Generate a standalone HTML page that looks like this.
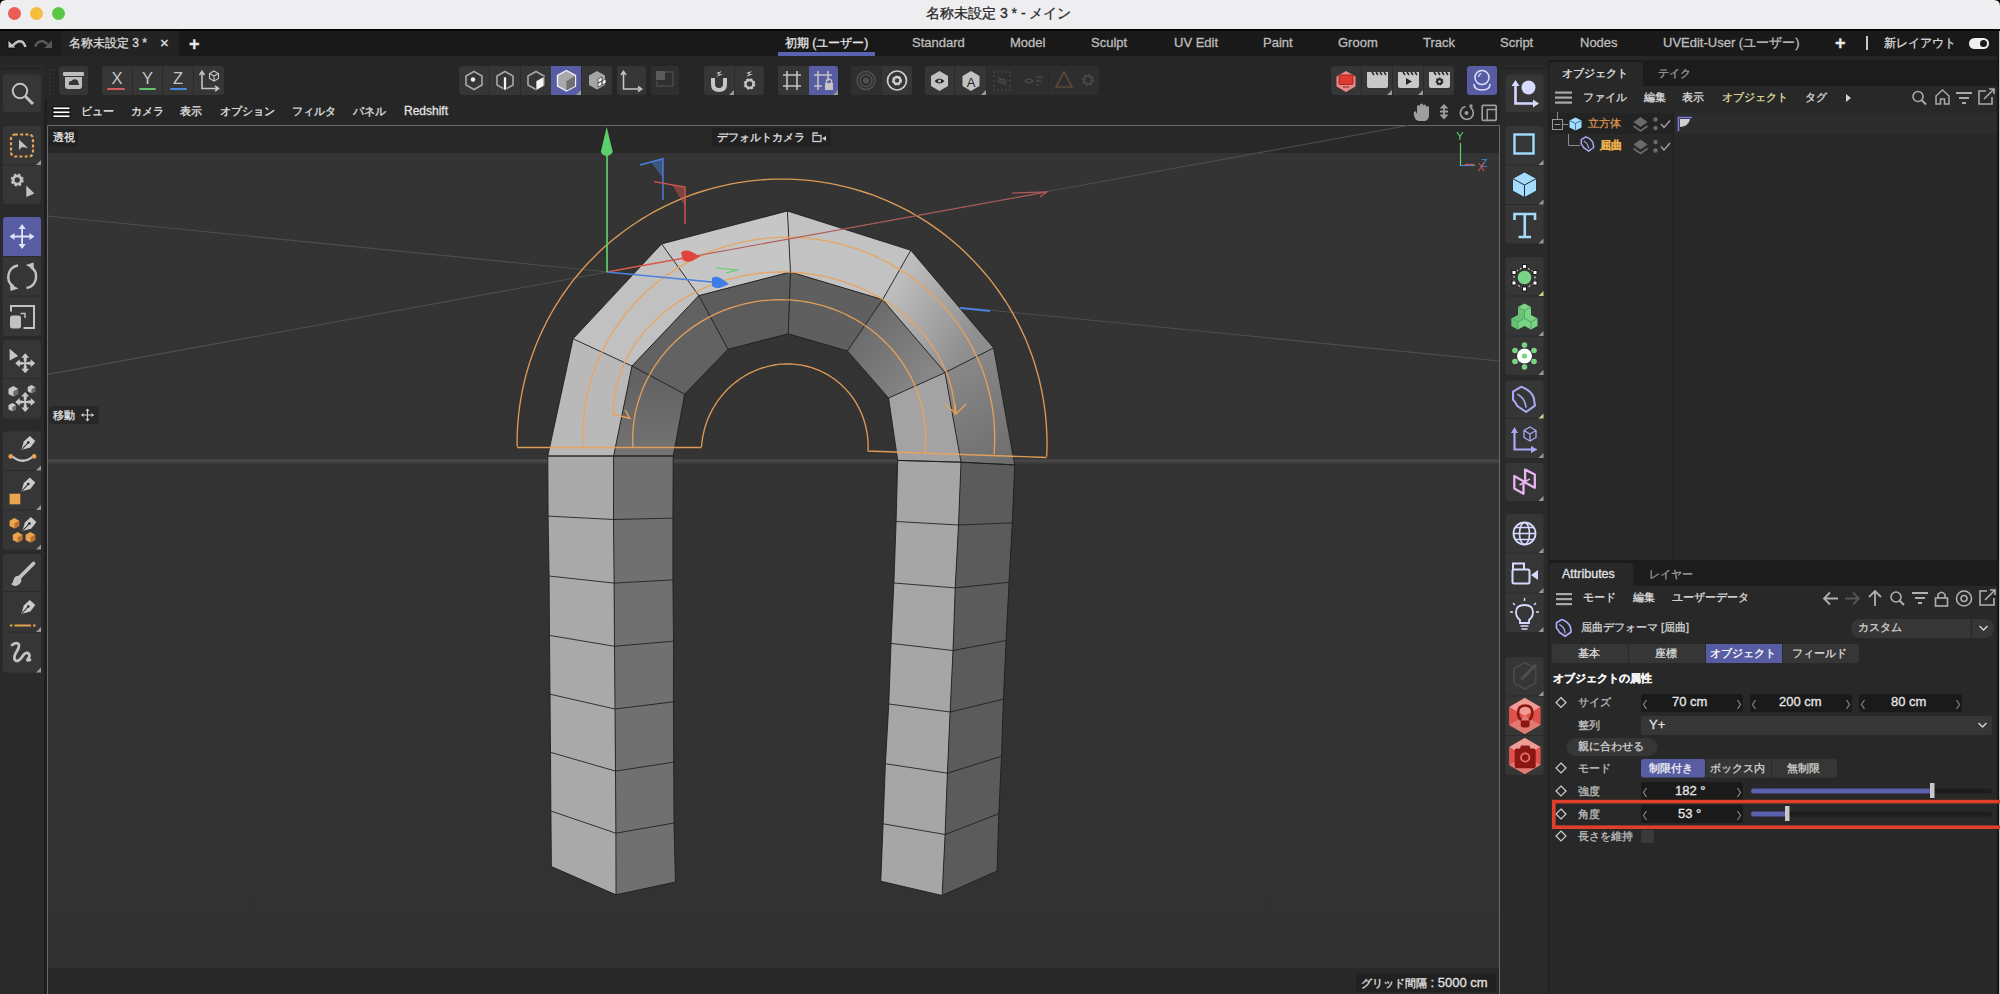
<!DOCTYPE html>
<html lang="ja">
<head>
<meta charset="utf-8">
<style>
*{box-sizing:border-box;margin:0;padding:0}
html,body{width:2000px;height:994px;overflow:hidden;background:#1e1e1e;font-family:"Liberation Sans",sans-serif;color:#d0d0d0;position:relative}
.a{position:absolute}
.t{position:absolute;white-space:nowrap;font-size:12px;line-height:14px;-webkit-text-stroke-width:0.3px}
svg{overflow:visible}
</style>
</head>
<body>
<!-- title bar -->
<div class="a" style="left:0;top:0;width:2000px;height:29px;background:#eeeef0"></div>
<div class="a" style="left:0;top:29px;width:2000px;height:2.5px;background:#050505"></div>
<div class="a" style="left:8px;top:7px;width:13px;height:13px;border-radius:50%;background:#ee5d55"></div>
<div class="a" style="left:30px;top:7px;width:13px;height:13px;border-radius:50%;background:#f4bd3b"></div>
<div class="a" style="left:52px;top:7px;width:13px;height:13px;border-radius:50%;background:#5cc747"></div>
<div class="t" style="left:926px;top:4px;font-size:14px;line-height:18px;color:#2a2a2a">名称未設定 3 * - メイン</div>

<!-- tab bar -->
<div class="a" style="left:0;top:31px;width:2000px;height:25px;background:#191919"></div>
<div class="a" style="left:0;top:31px;width:60px;height:25px;background:#1c1c1c"></div>
<div class="a" style="left:61px;top:31px;width:118px;height:25px;background:#232323"></div>
<svg class="a" style="left:0;top:30px" width="60" height="26" viewBox="0 30 60 26">
 <path d="M8.1 40V47.9H15.9Z" fill="#c4c4c4" stroke="#000" stroke-width="0.6"/>
 <path d="M13 45.5Q18 39.5 22.5 42Q24.5 43.5 25.5 47" fill="none" stroke="#c4c4c4" stroke-width="2.6"/>
 <path d="M51.9 40.2V47.9H44.4Z" fill="#5a5a5a"/>
 <path d="M35 46.5Q38 40 43.5 41.5Q46 42.5 47.5 44.5" fill="none" stroke="#5a5a5a" stroke-width="2.6"/>
</svg>
<div class="t" style="left:69px;top:36px;font-size:12px;line-height:14px;color:#d8d8d8">名称未設定 3 *</div>
<div class="t" style="left:160px;top:35px;font-size:15px;line-height:16px;color:#e0e0e0">×</div>
<div class="t" style="left:189px;top:34px;font-size:18px;line-height:20px;color:#e8e8e8;font-weight:bold">+</div>

<div class="t" style="left:785px;top:36px;font-size:12px;line-height:14px;color:#e6e6e6">初期 (ユーザー)</div>
<div class="a" style="left:778px;top:52px;width:97px;height:4px;background:#5a62b2"></div>
<div class="t" style="left:912px;top:36px;font-size:13px;line-height:14px;color:#bdbdbd">Standard</div>
<div class="t" style="left:1010px;top:36px;font-size:13px;line-height:14px;color:#bdbdbd">Model</div>
<div class="t" style="left:1091px;top:36px;font-size:13px;line-height:14px;color:#bdbdbd">Sculpt</div>
<div class="t" style="left:1174px;top:36px;font-size:13px;line-height:14px;color:#bdbdbd">UV Edit</div>
<div class="t" style="left:1263px;top:36px;font-size:13px;line-height:14px;color:#bdbdbd">Paint</div>
<div class="t" style="left:1338px;top:36px;font-size:13px;line-height:14px;color:#bdbdbd">Groom</div>
<div class="t" style="left:1423px;top:36px;font-size:13px;line-height:14px;color:#bdbdbd">Track</div>
<div class="t" style="left:1500px;top:36px;font-size:13px;line-height:14px;color:#bdbdbd">Script</div>
<div class="t" style="left:1580px;top:36px;font-size:13px;line-height:14px;color:#bdbdbd">Nodes</div>
<div class="t" style="left:1663px;top:36px;font-size:13px;line-height:14px;color:#bdbdbd">UVEdit-User (ユーザー)</div>
<div class="t" style="left:1835px;top:33px;font-size:18px;line-height:20px;color:#e8e8e8;font-weight:bold">+</div>
<div class="a" style="left:1866px;top:36px;width:2px;height:14px;background:#c8c8c8"></div>
<div class="t" style="left:1884px;top:36px;font-size:12px;line-height:14px;color:#d8d8d8">新レイアウト</div>
<div class="a" style="left:1969px;top:38px;width:20px;height:11px;border-radius:6px;background:#f0f0f0"></div>
<div class="a" style="left:1980px;top:40px;width:7px;height:7px;border-radius:50%;background:#1a1a1a"></div>

<!-- toolbar -->
<div class="a" style="left:0;top:56px;width:2000px;height:938px;background:#262626"></div>
<svg class="a" style="left:0;top:56px" width="1550" height="44" viewBox="0 56 1550 44">
 <defs>
  <pattern id="dots" width="4" height="4" patternUnits="userSpaceOnUse"><rect x="1" y="1" width="1.3" height="1.3" fill="#3c3c3c"/></pattern>
 </defs>
 <rect x="3" y="62" width="39" height="5" fill="url(#dots)"/>
 <rect x="46" y="67" width="8" height="28" fill="url(#dots)"/>
 <!-- buttons -->
 <g fill="#363636">
  <rect x="59" y="66" width="29" height="29" rx="3"/>
  <rect x="102" y="66" width="122" height="29" rx="3"/>
  <rect x="459" y="66" width="153" height="29" rx="3"/>
  <rect x="617" y="66" width="29" height="29" rx="3"/>
  <rect x="651" y="66" width="28" height="29" rx="3" fill="#2f2f2f"/>
  <rect x="704" y="66" width="60" height="29" rx="3"/>
  <rect x="778" y="66" width="60" height="29" rx="3"/>
  <rect x="851" y="66" width="61" height="29" rx="3"/>
  <rect x="925" y="66" width="174" height="29" rx="3"/>
  <rect x="1331" y="66" width="123" height="29" rx="3"/>
 </g>
 <rect x="551" y="66" width="31" height="29" fill="#575ca3"/>
 <rect x="808" y="66" width="30" height="29" rx="3" fill="#575ca3"/>
 <rect x="778" y="66" width="31" height="29" rx="3" fill="#363636"/>
 <rect x="1467" y="66" width="30" height="29" rx="3" fill="#575ca3"/>
 <rect x="986" y="66" width="113" height="29" rx="3" fill="#2e2e2e"/>
 <rect x="851" y="66" width="30" height="29" rx="3" fill="#2f2f2f"/>
 <!-- separators -->
 <g stroke="#2a2a2a" stroke-width="1">
  <path d="M132.5 66V95M162.5 66V95M193.5 66V95M489.5 66V95M520.5 66V95M581.5 66V95M734.5 66V95M881.5 66V95M954.5 66V95M986.5 66V95M1017.5 66V95M1048.5 66V95M1361.5 66V95M1392.5 66V95M1423.5 66V95"/>
 </g>
 <!-- corner triangles -->
 <g fill="#9a9a9a">
  <path d="M581 95L581 90L576 95Z"/><path d="M734 95L734 90L729 95Z"/><path d="M838 95L838 90L833 95Z"/>
  <path d="M986 95L986 90L981 95Z"/><path d="M1392 95L1392 90L1387 95Z"/><path d="M1423 95L1423 90L1418 95Z"/>
 </g>
 <!-- archive icon -->
 <rect x="63" y="72" width="21" height="4" rx="1" fill="#bdbdbd"/>
 <path d="M65 77H82V86Q82 89 79 89H68Q65 89 65 86Z" fill="#bdbdbd"/>
 <path d="M69 85Q68 81 71.5 81Q73 78.5 76 79.5Q78.5 80 78 82.5Q79.5 83 79 85Z" fill="#363636"/>
 <!-- XYZ -->
 <g font-family="Liberation Sans" font-size="16.5" fill="#c4c4c4" text-anchor="middle">
  <text x="117" y="84">X</text><text x="147.5" y="84">Y</text><text x="178" y="84">Z</text>
 </g>
 <rect x="107" y="88" width="18" height="2" rx="1" fill="#d35b5b"/>
 <rect x="139" y="88" width="17" height="2" rx="1" fill="#62c16a"/>
 <rect x="170" y="88" width="17" height="2" rx="1" fill="#4d84db"/>
 <!-- axis+cube -->
 <g fill="none" stroke="#c4c4c4" stroke-width="1.6">
  <path d="M202 72V88.5H218"/><path d="M199.5 75L202 71.5L204.5 75"/><path d="M215 86L218.5 88.5L215 91"/>
  <path d="M214 71L218.5 73.5V78.5L214 81L209.5 78.5V73.5Z M209.5 73.5L214 76L218.5 73.5M214 76V81" stroke-width="1.1"/>
 </g>
 <!-- model mode icons -->
 <g fill="none" stroke="#a8a8a8" stroke-width="1.6">
  <path d="M474 71.5L482 76V85L474 89.5L466 85V76Z"/>
  <path d="M505 71.5L513 76V85L505 89.5L497 85V76Z"/>
  <path d="M536 71.5L544 76V85L536 89.5L528 85V76Z"/>
 </g>
 <circle cx="473" cy="79.5" r="2.2" fill="#f0f0f0"/>
 <rect x="503.5" y="77" width="3" height="13" fill="#f4f4f4" stroke="#222" stroke-width="0.6"/>
 <path d="M536 81L544 76.5V86L536 90.5Z" fill="#f4f4f4" stroke="#222" stroke-width="0.6"/>
 <path d="M566.5 70.5L575.5 75.5V86L566.5 91L557.5 86V75.5Z" fill="#a9a9a9" stroke="#f0f2ff" stroke-width="1.4"/>
 <path d="M566.5 81L575 76V86L566.5 90.5Z" fill="#6f6f6f"/>
 <path d="M597 71L605 75.5V85L597 89.5L589 85V75.5Z" fill="#a5a5a5"/>
 <path d="M598 79L602 77V81L598 83Z M602 81L606 79V83L602 85Z M598 83L602 81 V85L598 87Z" fill="#f4f4f4" stroke="#1e1e1e" stroke-width="0.6"/>
 <g fill="none" stroke="#c4c4c4" stroke-width="1.6"><path d="M623.5 72V89H641"/><path d="M621 75L623.5 71.5L626 75"/><path d="M638 86.5L641.5 89L638 91.5"/></g>
 <rect x="656" y="71" width="9" height="9" fill="#5a5a5a"/><path d="M665 72H673V86H657V81" fill="none" stroke="#4a4a4a" stroke-width="1.5"/>
 <!-- magnet -->
 <path d="M713 78V84Q713 90 719 90Q725 90 725 84V78" fill="none" stroke="#c4c4c4" stroke-width="4"/>
 <path d="M716 73L722 71L719 74L723 74L716 77L719 74Z" fill="#c4c4c4"/>
 <path d="M746 73L752 71L749 74L753 74L746 77L749 74Z" fill="#c4c4c4"/>
 <circle cx="749.5" cy="84" r="4.2" fill="none" stroke="#c4c4c4" stroke-width="3.2" stroke-dasharray="2 1.3"/>
 <circle cx="749.5" cy="84" r="4" fill="none" stroke="#c4c4c4" stroke-width="2"/>
 <!-- grid icons -->
 <g fill="none" stroke="#c4c4c4" stroke-width="1.6">
  <path d="M787 71V90M797 71V90M783 75H801M783 86H801"/>
  <path d="M818 71V90M828 71V81M814 75H832M814 86H822"/>
 </g>
 <path d="M825 83H833V90H825Z" fill="#c4c4c4"/><path d="M826.5 83V80.5Q829 77.5 831.5 80.5V83" fill="none" stroke="#c4c4c4" stroke-width="1.4"/>
 <!-- circles -->
 <g fill="none" stroke="#505050" stroke-width="1.5"><circle cx="866" cy="80.5" r="9"/><circle cx="866" cy="80.5" r="6"/></g>
 <circle cx="866" cy="80.5" r="3" fill="#505050"/>
 <circle cx="897" cy="80.5" r="9.5" fill="none" stroke="#cfcfcf" stroke-width="1.7"/>
 <circle cx="897" cy="80.5" r="3.5" fill="none" stroke="#cfcfcf" stroke-width="3" stroke-dasharray="1.8 1.1"/>
 <circle cx="897" cy="80.5" r="3.5" fill="none" stroke="#cfcfcf" stroke-width="2"/>
 <!-- hex eye / A -->
 <path d="M939.5 71L948 76V86L939.5 91L931 86V76Z" fill="#c2c2c2"/>
 <path d="M934.5 81Q939.5 76 944.5 81Q939.5 86 934.5 81Z" fill="#222"/><circle cx="939.5" cy="81" r="1.5" fill="#c2c2c2"/>
 <path d="M971 71L979.5 76V86L971 91L962.5 86V76Z" fill="#c2c2c2"/>
 <text x="971" y="86.5" font-family="Liberation Sans" font-size="13" text-anchor="middle" fill="#222">A</text>
 <!-- dim icons -->
 <g fill="#474747">
  <circle cx="994" cy="72" r="0.9"/><circle cx="998" cy="72" r="0.9"/><circle cx="1002" cy="72" r="0.9"/><circle cx="1006" cy="72" r="0.9"/><circle cx="1010" cy="72" r="0.9"/>
  <circle cx="994" cy="90" r="0.9"/><circle cx="998" cy="90" r="0.9"/><circle cx="1002" cy="90" r="0.9"/><circle cx="1006" cy="90" r="0.9"/><circle cx="1010" cy="90" r="0.9"/>
  <circle cx="994" cy="76" r="0.9"/><circle cx="994" cy="81" r="0.9"/><circle cx="994" cy="86" r="0.9"/><circle cx="1010" cy="76" r="0.9"/><circle cx="1010" cy="81" r="0.9"/><circle cx="1010" cy="86" r="0.9"/>
 </g>
 <path d="M998 81Q1002 77 1006 81Q1002 85 998 81Z M998 77L1006 85" fill="none" stroke="#474747" stroke-width="1.2"/>
 <path d="M1025 81Q1029 77 1033 81Q1029 85 1025 81Z" fill="none" stroke="#474747" stroke-width="1.4"/>
 <path d="M1036 77H1043M1036 81H1041M1036 85H1039" stroke="#474747" stroke-width="1.4"/>
 <path d="M1064 72L1072 87H1056Z" fill="none" stroke="#5a4a38" stroke-width="1.6"/>
 <circle cx="1088" cy="80" r="4.5" fill="none" stroke="#474747" stroke-width="3.2" stroke-dasharray="2 1.4"/>
 <circle cx="1088" cy="80" r="4" fill="none" stroke="#474747" stroke-width="2"/>
 <!-- render icons -->
 <path d="M1346 71L1355.5 76.5V86.5L1346 92L1336.5 86.5V76.5Z" fill="#e88a85"/>
 <rect x="1339" y="75" width="14" height="9.5" rx="1" fill="#e03a33" stroke="#8c1f1a" stroke-width="0.8"/>
 <path d="M1343 87H1349" stroke="#8c1f1a" stroke-width="1"/>
 <g fill="#c8c8c8">
  <path d="M1367 72H1388V86Q1388 88 1386 88H1369Q1367 88 1367 86Z"/>
  <path d="M1398 72H1419V86Q1419 88 1417 88H1400Q1398 88 1398 86Z"/>
  <path d="M1429 72H1450V86Q1450 88 1448 88H1431Q1429 88 1429 86Z"/>
 </g>
 <g stroke="#262626" stroke-width="1.5">
  <path d="M1372 72L1374 75M1376 72L1378 75M1380 72L1382 75M1384 72L1386 75"/>
  <path d="M1403 72L1405 75M1407 72L1409 75M1411 72L1413 75M1415 72L1417 75"/>
  <path d="M1434 72L1436 75M1438 72L1440 75M1442 72L1444 75M1446 72L1448 75"/>
 </g>
 <path d="M1406 78V85L1412 81.5Z" fill="#262626"/>
 <circle cx="1439.5" cy="81.5" r="2.6" fill="none" stroke="#262626" stroke-width="2.6" stroke-dasharray="1.4 0.9"/>
 <circle cx="1439.5" cy="81.5" r="2.4" fill="none" stroke="#262626" stroke-width="1.6"/>
 <!-- blue lens -->
 <circle cx="1482" cy="77.5" r="7" fill="none" stroke="#dfe2ff" stroke-width="1.5"/>
 <path d="M1478.5 77Q1479 74 1481.5 73.5" fill="none" stroke="#dfe2ff" stroke-width="1.2"/>
 <path d="M1474 84Q1474 90 1482 90Q1490 90 1490 84" fill="none" stroke="#dfe2ff" stroke-width="1.5"/>
 <!-- right grip -->
 <rect x="1505" y="62" width="38" height="5" fill="url(#dots)"/>
</svg>

<!-- left column -->
<div class="a" style="left:0;top:70px;width:44px;height:924px;background:#2a2a2a"></div>
<div class="a" style="left:44px;top:99px;width:3px;height:895px;background:#1f1f1f"></div>
<!-- right column -->
<div class="a" style="left:1500px;top:70px;width:48px;height:924px;background:#2a2a2a"></div>
<div class="a" style="left:1548px;top:60px;width:1px;height:934px;background:#1d1d1d"></div>
<svg class="a" style="left:0;top:70px" width="47" height="620" viewBox="0 70 47 620">
 <g fill="#363636">
  <rect x="3" y="74.5" width="38" height="37.5" rx="3"/>
  <rect x="3" y="126" width="38" height="78" rx="3"/>
  <rect x="3" y="217" width="38" height="119" rx="3"/>
  <rect x="3" y="340" width="38" height="78.5" rx="3"/>
  <rect x="3" y="431.5" width="38" height="118" rx="3"/>
  <rect x="3" y="554" width="38" height="118.5" rx="3"/>
 </g>
 <rect x="3" y="217" width="38" height="40" rx="3" fill="#575ca3"/>
 <g stroke="#2a2a2a" stroke-width="1"><path d="M3 165H41M3 256.5H41M3 296H41M3 378.5H41M3 470.5H41M3 510H41M3 591.5H41M3 632H41"/></g>
 <g fill="#9a9a9a"><path d="M41 165V160L36 165Z"/><path d="M41 510V505L36 510Z"/><path d="M41 549.5V544.5L36 549.5Z"/><path d="M41 632V627L36 632Z"/><path d="M41 672.5V667.5L36 672.5Z"/></g>
 <!-- search -->
 <circle cx="20" cy="91" r="7.2" fill="none" stroke="#c2c2c2" stroke-width="2"/>
 <path d="M25.5 96.5L33 104" stroke="#c2c2c2" stroke-width="3"/>
 <!-- select -->
 <rect x="11" y="134.5" width="22" height="22" rx="4" fill="none" stroke="#e7a45a" stroke-width="2.2" stroke-dasharray="3 2.2"/>
 <path d="M19 139.5V150L22 147L28 148Z" fill="#c2c2c2"/>
 <!-- gear select -->
 <circle cx="17.2" cy="180" r="4.8" fill="none" stroke="#c2c2c2" stroke-width="3.4" stroke-dasharray="2.2 1.6"/>
 <circle cx="17.2" cy="180" r="4" fill="none" stroke="#c2c2c2" stroke-width="2.6"/>
 <path d="M26.3 185.4V197L34.4 193.5Z" fill="#c2c2c2"/>
 <!-- move active -->
 <path d="M22.1 226V247M11.5 236.5H32.5" fill="none" stroke="#dfe1f4" stroke-width="1.8"/>
 <path d="M18.5 229L22.1 224L25.7 229ZM18.5 244L22.1 249L25.7 244ZM14.5 232.9L9.5 236.5L14.5 240.1ZM29.5 232.9L34.5 236.5L29.5 240.1Z" fill="#dfe1f4"/>
 <!-- rotate -->
 <path d="M18 265.5A11.5 11.5 0 0 0 13.5 286.5" fill="none" stroke="#c2c2c2" stroke-width="2.4"/>
 <path d="M26.5 288A11.5 11.5 0 0 0 30.8 267" fill="none" stroke="#c2c2c2" stroke-width="2.4"/>
 <path d="M10 284L18.5 288.5L10.5 291Z" fill="#c2c2c2"/>
 <path d="M34 269.5L25.8 265L33.5 262.5Z" fill="#c2c2c2"/>
 <!-- scale -->
 <rect x="10" y="315.5" width="11" height="13" rx="2.5" fill="#c2c2c2"/>
 <path d="M11 311.5V306H34V328H23.5" fill="none" stroke="#c2c2c2" stroke-width="2"/>
 <path d="M20.5 313.5H25V318" fill="none" stroke="#c2c2c2" stroke-width="1.4"/>
 <!-- select+move -->
 <path d="M9.6 348.7V360.4L18.1 356.1Z" fill="#c8c8c8"/>
 <path d="M25.2 356.2V370.2M18.2 363.2H32.2" stroke="#c8c8c8" stroke-width="3"/><path d="M21.2 357.7L25.2 353.2L29.2 357.7ZM21.2 368.7L25.2 373.2L29.2 368.7ZM19.7 359.2L15.2 363.2L19.7 367.2ZM30.7 359.2L35.2 363.2L30.7 367.2Z" fill="#c8c8c8"/><path d="M22.7 360.7h1.5v1.5h-1.5zM26.2 360.7h1.5v1.5h-1.5zM22.7 364.2h1.5v1.5h-1.5zM26.2 364.2h1.5v1.5h-1.5z" fill="#333"/>
 <!-- model move -->
 <path d="M13.3 386L18.1 388.64V393.92L13.3 396.56L8.5 393.92V388.64Z" fill="#c8c8c8"/><path d="M13.3 391.28L18.1 388.64V393.92L13.3 396.56Z" fill="#6a6a6a"/><path d="M31.45 385L35.2 387.0625V391.1875L31.45 393.25L27.7 391.1875V387.0625Z" fill="#c8c8c8"/><path d="M31.45 389.125L35.2 387.0625V391.1875L31.45 393.25Z" fill="#6a6a6a"/><path d="M12.25 403L16.0 405.0625V409.1875L12.25 411.25L8.5 409.1875V405.0625Z" fill="#c8c8c8"/><path d="M12.25 407.125L16.0 405.0625V409.1875L12.25 411.25Z" fill="#6a6a6a"/>
 <path d="M25.2 395V409M18.2 402H32.2" stroke="#c8c8c8" stroke-width="3"/><path d="M21.2 396.5L25.2 392L29.2 396.5ZM21.2 407.5L25.2 412L29.2 407.5ZM19.7 398L15.2 402L19.7 406ZM30.7 398L35.2 402L30.7 406Z" fill="#c8c8c8"/><path d="M22.7 399.5h1.5v1.5h-1.5zM26.2 399.5h1.5v1.5h-1.5zM22.7 403h1.5v1.5h-1.5zM26.2 403h1.5v1.5h-1.5z" fill="#333"/>
 <!-- pen tools -->
 <g transform="translate(21.3 450)"><path d="M0 0L2.5 -8.5L8.5 -14L14 -9L9 -2.5Z" fill="#cbcbcb"/><path d="M0.5 -0.5L6.5 -7" stroke="#222" stroke-width="1.1"/><circle cx="7" cy="-7.5" r="1.3" fill="#222"/></g>
 <path d="M12.5 456.5Q22.5 465 33 456.5" fill="none" stroke="#c8c8c8" stroke-width="2.2"/>
 <circle cx="10.7" cy="456.4" r="2.3" fill="#e9a14f"/><circle cx="34.1" cy="456.4" r="2.3" fill="#e9a14f"/>
 <g transform="translate(21.3 491.5)"><path d="M0 0L2.5 -8.5L8.5 -14L14 -9L9 -2.5Z" fill="#cbcbcb"/><path d="M0.5 -0.5L6.5 -7" stroke="#222" stroke-width="1.1"/><circle cx="7" cy="-7.5" r="1.3" fill="#222"/></g>
 <rect x="9.6" y="493.7" width="10.7" height="10.6" fill="#eaa44f"/>
 <g transform="translate(22.4 531)"><path d="M0 0L2.5 -8.5L8.5 -14L14 -9L9 -2.5Z" fill="#cbcbcb"/><path d="M0.5 -0.5L6.5 -7" stroke="#222" stroke-width="1.1"/><circle cx="7" cy="-7.5" r="1.3" fill="#222"/></g>
 <path d="M14.399999999999999 518L19.2 520.64V525.92L14.399999999999999 528.56L9.6 525.92V520.64Z" fill="#eaa44f"/><path d="M14.399999999999999 523.28L19.2 520.64V525.92L14.399999999999999 528.56Z" fill="#b8732c"/><path d="M17.6 532L22.4 534.64V539.92L17.6 542.56L12.8 539.92V534.64Z" fill="#eaa44f"/><path d="M17.6 537.28L22.4 534.64V539.92L17.6 542.56Z" fill="#b8732c"/><path d="M30.400000000000002 532L35.2 534.64V539.92L30.400000000000002 542.56L25.6 539.92V534.64Z" fill="#eaa44f"/><path d="M30.400000000000002 537.28L35.2 534.64V539.92L30.400000000000002 542.56Z" fill="#b8732c"/>
 <path d="M41 470.5V465.5L36 470.5Z" fill="#9a9a9a"/>
 <!-- brush -->
 <path d="M33.5 563.5L20 577" stroke="#c2c2c2" stroke-width="3.8" stroke-linecap="round"/>
 <path d="M20.5 576Q23 581 19 584.5Q15 587.5 11 584Q13 583 13.5 580Q14.5 575 20.5 576Z" fill="#c2c2c2"/>
 <!-- pen line -->
 <g transform="translate(21.3 614)"><path d="M0 0L2.5 -8.5L8.5 -14L14 -9L9 -2.5Z" fill="#cbcbcb"/><path d="M0.5 -0.5L6.5 -7" stroke="#222" stroke-width="1.1"/><circle cx="7" cy="-7.5" r="1.3" fill="#222"/></g>
 <path d="M10 625.5H12.5M14.5 625.5H31M33 625.5H35.5" stroke="#e9a14f" stroke-width="2.2"/>
 <!-- spline -->
 <path d="M12 645Q16 642 18.5 644Q20 646 17 651Q13 657 15 660Q18 663 22 657Q25 652 28 653Q31 655 28 659Q26 661 30 660" fill="none" stroke="#c2c2c2" stroke-width="2.8" stroke-linecap="round" stroke-linejoin="round"/>
</svg>

<svg class="a" style="left:1500px;top:70px" width="48" height="710" viewBox="1500 70 48 710">
 <g fill="#363636">
  <rect x="1505.5" y="74.5" width="38" height="37.5" rx="3"/>
  <rect x="1505.5" y="126" width="38" height="117.5" rx="3"/>
  <rect x="1505.5" y="257" width="38" height="118" rx="3"/>
  <rect x="1505.5" y="380.5" width="38" height="77.5" rx="3"/>
  <rect x="1505.5" y="463" width="38" height="38" rx="3"/>
  <rect x="1505.5" y="514" width="38" height="118" rx="3"/>
  <rect x="1505.5" y="657" width="38" height="118" rx="3"/>
 </g>
 <g stroke="#2a2a2a" stroke-width="1"><path d="M1505 165H1544M1505 204.5H1544M1505 296H1544M1505 336H1544M1505 418.5H1544M1505 553H1544M1505 593H1544M1505 696H1544M1505 735.5H1544"/></g>
 <g fill="#9a9a9a"><path d="M1543.5 165V160L1538.5 165Z"/><path d="M1543.5 204.5V199.5L1538.5 204.5Z"/><path d="M1543.5 243.5V238.5L1538.5 243.5Z"/><path d="M1543.5 375V370L1538.5 375Z"/><path d="M1543.5 336V331L1538.5 336Z"/><path d="M1543.5 458V453L1538.5 458Z"/><path d="M1543.5 501V496L1538.5 501Z"/><path d="M1543.5 593V588L1538.5 593Z"/><path d="M1543.5 632V627L1538.5 632Z"/><path d="M1543.5 553V548L1538.5 553Z"/><path d="M1543.5 696V691L1538.5 696Z"/></g>
 <path d="M1543.5 296V291L1538.5 296Z" fill="#d8d08a"/><path d="M1543.5 418.5V413.5L1538.5 418.5Z" fill="#d8d08a"/>
 <!-- null / axis -->
 <circle cx="1528.5" cy="87.5" r="7" fill="#d6daff"/>
 <path d="M1515.5 84V103.5H1535" fill="none" stroke="#d6daff" stroke-width="2.6"/>
 <path d="M1511.5 86L1515.5 80L1519.5 86ZM1533 99.5L1539 103.5L1533 107.5Z" fill="#d6daff"/>
 <!-- square -->
 <rect x="1514.5" y="134.5" width="19" height="19" fill="none" stroke="#9fdcff" stroke-width="2.4"/>
 <!-- cube -->
 <path d="M1524.5 172L1536.5 178.5V191L1524.5 197.5L1512.5 191V178.5Z" fill="#a6dcfb" stroke="#1d2a33" stroke-width="0.9"/>
 <path d="M1512.5 178.5L1524.5 185L1536.5 178.5M1524.5 185V197.5" fill="none" stroke="#1d2a33" stroke-width="1"/>
 <!-- T -->
 <path d="M1514.5 220V214H1535V220M1524.75 214V237M1518.5 237H1531" fill="none" stroke="#a6dcfb" stroke-width="2.6"/>
 <!-- green generators -->
 <path d="M1524.5 266.5L1535 272.5V283L1524.5 289L1514 283V272.5Z" fill="none" stroke="#ffffff" stroke-width="1" stroke-dasharray="2 2"/>
 <circle cx="1524.5" cy="277.5" r="6.8" fill="#7ad487"/>
 <g fill="#fff" stroke="#111" stroke-width="0.9"><rect x="1522.5" y="264.5" width="4" height="4"/><rect x="1533" y="270.5" width="4" height="4"/><rect x="1533" y="281" width="4" height="4"/><rect x="1522.5" y="287" width="4" height="4"/><rect x="1512" y="281" width="4" height="4"/><rect x="1512" y="270.5" width="4" height="4"/></g>
 <path d="M1524.5 303.5L1531 307V315L1537.5 318.5V326L1531 329.5L1524.5 326L1518 329.5L1511.5 326V318.5L1518 315V307Z" fill="#79d486"/>
 <path d="M1518 307L1524.5 310.5L1531 307M1524.5 310.5V318.5M1511.5 318.5L1518 322L1524.5 318.5L1531 322L1537.5 318.5M1518 322V329.5M1531 322V329.5" fill="none" stroke="#4f9a5a" stroke-width="0.9"/>
 <path d="M1524.5 310.5V318.5L1518 322V329.5L1511.5 326V318.5L1518 315V307Z" fill="#5fb46c" opacity="0.6"/>
 <circle cx="1524.5" cy="356" r="7.5" fill="#fff"/>
 <g fill="#7ad487"><circle cx="1524.5" cy="356" r="2.6"/><circle cx="1524.5" cy="345" r="2.8"/><circle cx="1524.5" cy="367" r="2.8"/><circle cx="1515" cy="350.5" r="2.8"/><circle cx="1534" cy="350.5" r="2.8"/><circle cx="1515" cy="361.5" r="2.8"/><circle cx="1534" cy="361.5" r="2.8"/></g>
 <!-- bend deformer -->
 <g transform="translate(1524 399.4) scale(1.5)" fill="none" stroke="#a9a9f4" stroke-linejoin="round"><path d="M-7.3 -5.2L-2 -8.4Q4.2 -6.4 6.5 -1.2L7.3 4.1L1.4 8.4L-4.5 4.4Q-5.3 2.1 -7.3 0.2Z" stroke-width="1.40"/><path d="M-4.5 -3.5Q0.7 -0.9 1.4 5.5" stroke-width="1.07"/></g>
 <!-- field/axis cube -->
 <path d="M1514.5 431V449.5H1533" fill="none" stroke="#a9a9f4" stroke-width="2.2"/><path d="M1511 433L1514.5 427L1518 433ZM1531 446L1537.5 449.5L1531 453Z" fill="#a9a9f4"/>
 <path d="M1530 427L1536 430.5V437.5L1530 441L1524 437.5V430.5Z M1524 430.5L1530 434L1536 430.5M1530 434V441" fill="none" stroke="#a9a9f4" stroke-width="1.3" stroke-linejoin="round"/>
 <!-- pink -->
 <path d="M1514.3 476L1523.5 481.3V493.8L1514.3 488.6Z M1525.1 469.6L1534.8 474.5V487.8L1525.1 482.5Z" fill="none" stroke="#e9b4f2" stroke-width="2.3" stroke-linejoin="round"/>
 <path d="M1519.5 485L1530 478.9" stroke="#e9b4f2" stroke-width="1.5"/>
 <!-- globe -->
 <circle cx="1524.5" cy="533.5" r="11" fill="none" stroke="#d6daff" stroke-width="1.8"/>
 <ellipse cx="1524.5" cy="533.5" rx="5" ry="11" fill="none" stroke="#d6daff" stroke-width="1.6"/>
 <path d="M1513.5 533.5H1535.5M1515.5 527.5H1533.5M1515.5 539.5H1533.5" stroke="#d6daff" stroke-width="1.4"/>
 <!-- camera -->
 <rect x="1512.5" y="569.5" width="17" height="14" rx="1.5" fill="none" stroke="#d6daff" stroke-width="2"/>
 <path d="M1513 570V563.5H1524V569.5" fill="none" stroke="#d6daff" stroke-width="2"/>
 <path d="M1531 575L1538 570V580Z" fill="#d6daff"/>
 <!-- light -->
 <path d="M1520 620Q1516 617 1516 612Q1516 605 1524.5 605Q1533 605 1533 612Q1533 617 1529 620V623H1520Z" fill="none" stroke="#d6daff" stroke-width="1.8"/>
 <path d="M1520.5 626H1528.5M1521.5 629H1527.5" stroke="#d6daff" stroke-width="1.4"/>
 <path d="M1524.5 598V601M1513 603L1515 605M1536 603L1534 605M1510 612H1513M1536 612H1539" stroke="#d6daff" stroke-width="1.4"/>
 <!-- dim pencil hex -->
 <path d="M1524.8 662.5L1535.7 668.8V682.7L1524.8 689L1513.9 682.7V668.8Z" fill="none" stroke="#4a4a4a" stroke-width="1.6"/>
 <path d="M1522 678.5L1535 665.6" stroke="#4e4e4e" stroke-width="3" stroke-linecap="round"/>
 <!-- red hex light -->
 <path d="M1524.8 698L1540.3 707.0V725.0L1524.8 734L1509.3 725.0V707.0Z" fill="#e6736d"/><path d="M1524.8 698L1540.3 707.0L1524.8 716L1509.3 707.0Z" fill="#ee9c96"/><path d="M1509.3 707.0L1524.8 716L1509.3 725.0Z M1540.3 707.0L1524.8 716L1540.3 725.0Z" fill="#e0514b"/><path d="M1524.8 716L1540.3 725.0L1524.8 734L1509.3 725.0Z" fill="#e27a74"/>
 <path d="M1521.3 720Q1518 717.5 1518 713Q1518 705.5 1525.2 705.5Q1532.4 705.5 1532.4 713Q1532.4 717.5 1529.1 720" fill="none" stroke="#8c1712" stroke-width="2.6"/>
 <path d="M1520.8 720.5H1529.6V725.5Q1529.6 727.5 1525.2 727.5Q1520.8 727.5 1520.8 725.5Z" fill="#8c1712"/>
 <!-- red hex camera -->
 <path d="M1524.8 738L1540.3 747.0V765.0L1524.8 774L1509.3 765.0V747.0Z" fill="#e6736d"/><path d="M1524.8 738L1540.3 747.0L1524.8 756L1509.3 747.0Z" fill="#ee9c96"/><path d="M1509.3 747.0L1524.8 756L1509.3 765.0Z M1540.3 747.0L1524.8 756L1540.3 765.0Z" fill="#e0514b"/><path d="M1524.8 756L1540.3 765.0L1524.8 774L1509.3 765.0Z" fill="#e27a74"/>
 <path d="M1514.6 751Q1514.6 748.6 1517 748.6H1520L1521 745.6H1529.4L1530.4 748.6H1533.3Q1535.7 748.6 1535.7 751V766Q1535.7 768.2 1533.3 768.2H1517Q1514.6 768.2 1514.6 766Z" fill="#8c1712"/>
 <circle cx="1525.2" cy="757.5" r="4.2" fill="none" stroke="#e6736d" stroke-width="1.8"/>
</svg>

<!-- viewport menu panel -->
<div class="a" style="left:47px;top:99px;width:1453px;height:26px;background:#262626;border-top-left-radius:3px"></div>
<svg class="a" style="left:47px;top:99px" width="30" height="26"><g fill="#fff" stroke="#000" stroke-width="0.8"><rect x="6" y="8" width="17" height="2.6"/><rect x="6" y="12" width="17" height="2.6"/><rect x="6" y="16" width="17" height="2.6"/></g></svg>
<div class="t" style="left:81px;top:104px;font-size:11px;line-height:14px;color:#e2e2e2">ビュー</div>
<div class="t" style="left:131px;top:104px;font-size:11px;line-height:14px;color:#e2e2e2">カメラ</div>
<div class="t" style="left:180px;top:104px;font-size:11px;line-height:14px;color:#e2e2e2">表示</div>
<div class="t" style="left:220px;top:104px;font-size:11px;line-height:14px;color:#e2e2e2">オプション</div>
<div class="t" style="left:292px;top:104px;font-size:11px;line-height:14px;color:#e2e2e2">フィルタ</div>
<div class="t" style="left:353px;top:104px;font-size:11px;line-height:14px;color:#e2e2e2">パネル</div>
<div class="t" style="left:404px;top:104px;font-size:12px;line-height:14px;color:#e2e2e2">Redshift</div>
<svg class="a" style="left:1410px;top:100px" width="90" height="24" viewBox="1410 100 90 24">
 <path d="M1416 120Q1413 115 1414 112L1415.5 111L1417 114V106.5Q1417 105 1418.5 105Q1420 105 1420 106.5V105Q1420 103.5 1421.5 103.5Q1423 103.5 1423 105V106Q1423 104.5 1424.5 104.5Q1426 104.5 1426 106V107.5Q1426 106 1427.5 106Q1429 106 1429 107.5V115Q1429 120 1425 121H1419Z" fill="#9e9e9e"/>
 <path d="M1444 104L1439.5 108.5H1448.5Z M1439.5 114.5H1448.5L1444 119.5Z" fill="#9e9e9e"/><path d="M1444 108V115M1440 111.5H1448" stroke="#9e9e9e" stroke-width="1.8"/>
 <path d="M1470.5 107.5A6.5 6.5 0 1 1 1465.5 106.5" fill="none" stroke="#9e9e9e" stroke-width="1.7"/>
 <circle cx="1466.5" cy="113" r="2" fill="#9e9e9e"/><circle cx="1471" cy="106" r="1.7" fill="#9e9e9e"/>
 <rect x="1482.2" y="105.3" width="14" height="15" rx="1" fill="none" stroke="#9e9e9e" stroke-width="1.7"/>
 <path d="M1486.5 109.5H1496M1487.2 109.5V120.5" stroke="#9e9e9e" stroke-width="1.5"/>
</svg>

<svg class="a" style="left:47px;top:125px" width="1453" height="869" viewBox="47 125 1453 869">
<defs>
<linearGradient id="vpbg" x1="0" y1="0" x2="0" y2="1"><stop offset="0" stop-color="#343434"/><stop offset="1" stop-color="#323232"/></linearGradient>
<linearGradient id="gD" gradientUnits="userSpaceOnUse" x1="900" y1="280" x2="980" y2="330"><stop offset="0" stop-color="#bdbdbd"/><stop offset="1" stop-color="#8e8e8e"/></linearGradient>
<linearGradient id="gO" gradientUnits="userSpaceOnUse" x1="950" y1="360" x2="1010" y2="460"><stop offset="0" stop-color="#8a8a8a"/><stop offset="1" stop-color="#6e6e6e"/></linearGradient>
<linearGradient id="gB" gradientUnits="userSpaceOnUse" x1="860" y1="330" x2="930" y2="390"><stop offset="0" stop-color="#6c6c6c"/><stop offset="1" stop-color="#8a8a8a"/></linearGradient>
<linearGradient id="gL0" gradientUnits="userSpaceOnUse" x1="0" y1="380" x2="0" y2="456"><stop offset="0" stop-color="#626262"/><stop offset="1" stop-color="#747474"/></linearGradient>
</defs>
<rect x="47" y="125" width="1453" height="869" fill="url(#vpbg)"/>
<rect x="48" y="126" width="1451" height="27" fill="#282828"/>
<rect x="48" y="968" width="1451" height="26" fill="#282828"/>
<path d="M47.5 994V125.5H1499.5V994" fill="none" stroke="#6a6a6a" stroke-width="1"/>
<rect x="48" y="455" width="1451" height="4" fill="#363636"/>
<rect x="48" y="459" width="1451" height="5" fill="#3c3c3c"/>
<rect x="48" y="459.5" width="1451" height="2.5" fill="#474747"/>
<path d="M48 216 L1499 361 M48 374.4 L1408 125.5" stroke="#4e4e4e" stroke-width="1.1" fill="none"/>
<polygon points="547.8,456.0 573.1,338.8 632.0,366.0 613.6,456.0" fill="#b9b9b9"/>
<polygon points="573.1,338.8 661.6,243.9 698.8,295.6 632.0,366.0" fill="#c1c1c1"/>
<polygon points="661.6,243.9 787.4,211.0 790.5,272.0 698.8,295.6" fill="#c6c6c6"/>
<polygon points="787.4,211.0 910.8,250.3 882.6,299.6 790.5,272.0" fill="#c2c2c2"/>
<polygon points="910.8,250.3 993.6,347.9 945.0,372.6 882.6,299.6" fill="url(#gD)"/>
<polygon points="993.6,347.9 1014.7,464.9 961.0,462.2 945.0,372.6" fill="url(#gO)"/>
<polygon points="613.6,456.0 632.0,366.0 684.7,394.1 673.2,456.0" fill="url(#gL0)"/>
<polygon points="632.0,366.0 698.8,295.6 728.0,349.3 684.7,394.1" fill="#626262"/>
<polygon points="698.8,295.6 790.5,272.0 788.2,333.8 728.0,349.3" fill="#5c5c5c"/>
<polygon points="790.5,272.0 882.6,299.6 847.4,350.9 788.2,333.8" fill="#5f5f5f"/>
<polygon points="882.6,299.6 945.0,372.6 888.6,398.0 847.4,350.9" fill="url(#gB)"/>
<polygon points="888.6,398.0 945.0,372.6 961.0,462.2 897.7,460.4" fill="#a3a3a3"/>
<polygon points="547.8,456.0 548.1,516.1 549.1,576.0 549.5,635.4 550.0,694.2 550.5,752.3 550.9,811.0 551.4,866.6 616.0,894.8 615.9,833.2 615.5,771.1 615.0,709.0 614.5,646.3 614.1,583.1 613.5,519.5 613.6,456.0" fill="#a9a9a9"/>
<polygon points="613.6,456.0 613.5,519.5 614.1,583.1 614.5,646.3 615.0,709.0 615.5,771.1 615.9,833.2 616.0,894.8 675.4,882.0 674.0,823.0 673.7,762.2 673.4,701.8 673.5,641.2 672.9,579.9 672.9,518.1 673.2,456.0" fill="#707070"/>
<polygon points="897.7,460.4 896.1,521.5 893.9,583.0 891.0,643.4 888.8,704.0 885.4,763.7 883.1,823.8 880.8,881.2 942.1,895.5 945.1,834.5 947.4,773.2 950.1,712.0 953.0,650.5 955.2,587.9 958.5,525.0 961.0,462.2" fill="#a6a6a6"/>
<polygon points="961.0,462.2 958.5,525.0 955.2,587.9 953.0,650.5 950.1,712.0 947.4,773.2 945.1,834.5 942.1,895.5 997.0,871.0 998.8,813.7 1001.5,756.3 1003.4,699.2 1006.1,640.5 1009.0,582.3 1012.3,522.8 1014.7,464.9" fill="#5b5b5b"/>
<path d="M547.8 456.0 L573.1 338.8 L661.6 243.9 L787.4 211.0 L910.8 250.3 L993.6 347.9 L1014.7 464.9 M613.6 456.0 L632.0 366.0 L698.8 295.6 L790.5 272.0 L882.6 299.6 L945.0 372.6 L961.0 462.2 M673.2 456.0 L684.7 394.1 L728.0 349.3 L788.2 333.8 L847.4 350.9 L888.6 398.0 L897.7 460.4 M547.8 456.0 L613.6 456.0 M613.6 456.0 L673.2 456.0 M573.1 338.8 L632.0 366.0 M632.0 366.0 L684.7 394.1 M661.6 243.9 L698.8 295.6 M698.8 295.6 L728.0 349.3 M787.4 211.0 L790.5 272.0 M790.5 272.0 L788.2 333.8 M910.8 250.3 L882.6 299.6 M882.6 299.6 L847.4 350.9 M993.6 347.9 L945.0 372.6 M945.0 372.6 L888.6 398.0 M1014.7 464.9 L961.0 462.2 M961.0 462.2 L897.7 460.4 M547.8 456.0 L548.1 516.1 L549.1 576.0 L549.5 635.4 L550.0 694.2 L550.5 752.3 L550.9 811.0 L551.4 866.6 M613.6 456.0 L613.5 519.5 L614.1 583.1 L614.5 646.3 L615.0 709.0 L615.5 771.1 L615.9 833.2 L616.0 894.8 M673.2 456.0 L672.9 518.1 L672.9 579.9 L673.5 641.2 L673.4 701.8 L673.7 762.2 L674.0 823.0 L675.4 882.0 M897.7 460.4 L896.1 521.5 L893.9 583.0 L891.0 643.4 L888.8 704.0 L885.4 763.7 L883.1 823.8 L880.8 881.2 M961.0 462.2 L958.5 525.0 L955.2 587.9 L953.0 650.5 L950.1 712.0 L947.4 773.2 L945.1 834.5 L942.1 895.5 M1014.7 464.9 L1012.3 522.8 L1009.0 582.3 L1006.1 640.5 L1003.4 699.2 L1001.5 756.3 L998.8 813.7 L997.0 871.0 M547.8 456.0 L613.6 456.0 L673.2 456.0 M897.7 460.4 L961.0 462.2 L1014.7 464.9 M548.1 516.1 L613.5 519.5 L672.9 518.1 M896.1 521.5 L958.5 525.0 L1012.3 522.8 M549.1 576.0 L614.1 583.1 L672.9 579.9 M893.9 583.0 L955.2 587.9 L1009.0 582.3 M549.5 635.4 L614.5 646.3 L673.5 641.2 M891.0 643.4 L953.0 650.5 L1006.1 640.5 M550.0 694.2 L615.0 709.0 L673.4 701.8 M888.8 704.0 L950.1 712.0 L1003.4 699.2 M550.5 752.3 L615.5 771.1 L673.7 762.2 M885.4 763.7 L947.4 773.2 L1001.5 756.3 M550.9 811.0 L615.9 833.2 L674.0 823.0 M883.1 823.8 L945.1 834.5 L998.8 813.7 M551.4 866.6 L616.0 894.8 L675.4 882.0 M880.8 881.2 L942.1 895.5 L997.0 871.0" fill="none" stroke="#1c1c1c" stroke-width="1" stroke-opacity="0.85" stroke-linejoin="round"/>
<path d="M517.0 446.5 L517.1 446.3 L517.1 439.7 L517.3 433.0 L517.6 426.4 L518.1 419.8 L518.8 413.2 L519.6 406.6 L520.6 400.1 L521.8 393.5 L523.1 387.0 L524.6 380.6 L526.2 374.2 L528.1 367.8 L530.0 361.4 L532.2 355.2 L534.5 348.9 L536.9 342.8 L539.5 336.7 L542.3 330.6 L545.2 324.7 L548.2 318.8 L551.4 313.0 L554.8 307.2 L558.3 301.6 L561.9 296.0 L565.7 290.6 L569.6 285.2 L573.6 279.9 L577.8 274.8 L582.1 269.7 L586.5 264.8 L591.1 259.9 L595.8 255.2 L600.6 250.6 L605.5 246.1 L610.5 241.8 L615.6 237.6 L620.9 233.5 L626.2 229.5 L631.6 225.7 L637.2 222.0 L642.8 218.4 L648.5 215.0 L654.3 211.7 L660.2 208.6 L666.1 205.6 L672.1 202.8 L678.2 200.1 L684.4 197.6 L690.6 195.2 L696.9 193.0 L703.2 191.0 L709.6 189.1 L716.0 187.4 L722.5 185.8 L729.0 184.4 L735.5 183.2 L742.1 182.1 L748.7 181.2 L755.3 180.4 L761.9 179.8 L768.6 179.4 L775.2 179.2 L781.9 179.1 L788.6 179.2 L795.2 179.4 L801.9 179.8 L808.5 180.4 L815.1 181.1 L821.7 182.1 L828.3 183.1 L834.8 184.4 L841.3 185.8 L847.8 187.4 L854.2 189.1 L860.6 191.0 L866.9 193.0 L873.2 195.2 L879.4 197.6 L885.6 200.1 L891.7 202.8 L897.7 205.6 L903.7 208.6 L909.5 211.7 L915.3 215.0 L921.1 218.4 L926.7 221.9 L932.2 225.6 L937.6 229.4 L943.0 233.4 L948.2 237.5 L953.4 241.7 L958.4 246.1 L963.3 250.6 L968.1 255.2 L972.8 259.9 L977.3 264.7 L981.8 269.7 L986.1 274.7 L990.3 279.9 L994.3 285.1 L998.2 290.5 L1002.0 296.0 L1005.7 301.5 L1009.2 307.2 L1012.5 312.9 L1015.7 318.7 L1018.8 324.6 L1021.7 330.6 L1024.5 336.6 L1027.1 342.7 L1029.5 348.9 L1031.8 355.1 L1034.0 361.4 L1035.9 367.7 L1037.8 374.1 L1039.4 380.5 L1040.9 387.0 L1042.3 393.5 L1043.4 400.0 L1044.4 406.6 L1045.3 413.1 L1045.9 419.7 L1046.4 426.3 L1046.8 433.0 L1047.0 439.6 L1047.0 446.2 L1046.8 452.9 L1046.7 456.2 L1046.5 456.5 M582.5 447.0 L583.2 446.7 L583.0 441.7 L582.9 436.7 L582.9 431.7 L583.1 426.7 L583.3 421.7 L583.8 416.7 L584.3 411.7 L585.0 406.7 L585.8 401.8 L586.7 396.9 L587.8 392.0 L589.0 387.1 L590.3 382.3 L591.7 377.5 L593.3 372.7 L595.0 368.0 L596.8 363.3 L598.7 358.6 L600.8 354.1 L603.0 349.5 L605.2 345.0 L607.6 340.6 L610.2 336.3 L612.8 332.0 L615.5 327.7 L618.4 323.6 L621.3 319.5 L624.4 315.5 L627.6 311.5 L630.9 307.7 L634.2 303.9 L637.7 300.2 L641.3 296.6 L644.9 293.0 L648.7 289.6 L652.5 286.3 L656.4 283.0 L660.4 279.9 L664.5 276.8 L668.7 273.9 L672.9 271.1 L677.2 268.3 L681.6 265.7 L686.1 263.2 L690.6 260.7 L695.2 258.4 L699.8 256.3 L704.5 254.2 L709.3 252.2 L714.1 250.4 L718.9 248.7 L723.8 247.0 L728.7 245.6 L733.7 244.2 L738.7 242.9 L743.7 241.8 L748.8 240.8 L753.9 239.9 L759.0 239.2 L764.1 238.6 L769.3 238.1 L774.4 237.7 L779.6 237.4 L784.8 237.3 L789.9 237.3 L795.1 237.4 L800.3 237.7 L805.5 238.1 L810.6 238.6 L815.7 239.2 L820.9 240.0 L826.0 240.8 L831.0 241.9 L836.1 243.0 L841.1 244.2 L846.1 245.6 L851.1 247.1 L856.0 248.7 L860.8 250.4 L865.7 252.3 L870.4 254.2 L875.2 256.3 L879.8 258.5 L884.5 260.8 L889.0 263.2 L893.5 265.8 L897.9 268.4 L902.3 271.1 L906.6 274.0 L910.8 276.9 L914.9 280.0 L918.9 283.1 L922.9 286.4 L926.8 289.7 L930.6 293.1 L934.3 296.7 L937.9 300.3 L941.4 304.0 L944.9 307.8 L948.2 311.6 L951.4 315.6 L954.5 319.6 L957.6 323.7 L960.5 327.8 L963.3 332.1 L966.0 336.4 L968.6 340.7 L971.0 345.2 L973.4 349.6 L975.6 354.2 L977.7 358.8 L979.7 363.4 L981.6 368.1 L983.4 372.8 L985.0 377.6 L986.5 382.4 L987.9 387.2 L989.1 392.1 L990.3 397.0 L991.3 401.9 L992.2 406.9 L992.9 411.8 L993.5 416.8 L994.0 421.8 L994.4 426.8 L994.6 431.8 L994.7 436.8 L994.7 441.9 L994.5 446.9 L994.2 451.9 L994.1 453.7 L994.5 453.5 M612.5 414.0 L613.3 413.8 L613.4 410.2 L613.5 406.6 L613.8 402.9 L614.2 399.3 L614.7 395.7 L615.4 392.1 L616.1 388.6 L616.9 385.0 L617.8 381.5 L618.9 378.0 L620.0 374.5 L621.2 371.0 L622.6 367.6 L624.0 364.2 L625.6 360.8 L627.2 357.5 L629.0 354.2 L630.8 351.0 L632.8 347.7 L634.8 344.6 L637.0 341.4 L639.2 338.4 L641.5 335.3 L643.9 332.4 L646.4 329.4 L649.0 326.6 L651.7 323.8 L654.4 321.0 L657.3 318.3 L660.2 315.7 L663.2 313.1 L666.2 310.6 L669.4 308.2 L672.6 305.8 L675.9 303.5 L679.2 301.3 L682.7 299.1 L686.2 297.0 L689.7 295.0 L693.3 293.1 L697.0 291.3 L700.7 289.5 L704.5 287.8 L708.3 286.2 L712.2 284.7 L716.1 283.2 L720.1 281.8 L724.1 280.6 L728.1 279.4 L732.2 278.3 L736.3 277.3 L740.4 276.3 L744.6 275.5 L748.8 274.7 L753.0 274.1 L757.2 273.5 L761.5 273.0 L765.7 272.6 L770.0 272.3 L774.3 272.1 L778.6 272.0 L782.9 272.0 L787.2 272.1 L791.5 272.2 L795.8 272.5 L800.0 272.8 L804.3 273.2 L808.6 273.8 L812.8 274.4 L817.0 275.1 L821.2 275.9 L825.4 276.7 L829.6 277.7 L833.7 278.7 L837.8 279.9 L841.9 281.1 L845.9 282.4 L849.9 283.8 L853.8 285.3 L857.7 286.9 L861.6 288.5 L865.4 290.2 L869.1 292.0 L872.8 293.9 L876.5 295.9 L880.1 297.9 L883.6 300.0 L887.1 302.2 L890.5 304.5 L893.8 306.8 L897.1 309.2 L900.2 311.7 L903.4 314.2 L906.4 316.8 L909.4 319.5 L912.3 322.2 L915.1 325.0 L917.8 327.8 L920.4 330.7 L923.0 333.6 L925.4 336.6 L927.8 339.7 L930.1 342.8 L932.3 345.9 L934.4 349.1 L936.4 352.4 L938.3 355.6 L940.1 359.0 L941.8 362.3 L943.4 365.7 L944.9 369.1 L946.4 372.5 L947.7 376.0 L948.9 379.5 L950.0 383.0 L951.0 386.6 L951.9 390.1 L952.6 393.7 L953.3 397.3 L953.9 400.9 L954.4 404.5 L954.7 408.1 L955.0 411.8 L955.1 414.0 L956.0 414.0 M632.5 447.0 L632.8 446.9 L632.7 443.4 L632.6 439.9 L632.7 436.4 L632.8 432.9 L633.0 429.4 L633.4 425.9 L633.8 422.5 L634.3 419.0 L634.9 415.5 L635.6 412.1 L636.4 408.7 L637.2 405.3 L638.2 401.9 L639.3 398.5 L640.4 395.2 L641.6 391.9 L642.9 388.6 L644.3 385.4 L645.8 382.1 L647.4 379.0 L649.1 375.8 L650.8 372.7 L652.6 369.7 L654.5 366.7 L656.5 363.7 L658.5 360.8 L660.7 357.9 L662.9 355.1 L665.1 352.3 L667.5 349.6 L669.9 347.0 L672.4 344.4 L675.0 341.8 L677.6 339.3 L680.3 336.9 L683.0 334.6 L685.8 332.3 L688.7 330.1 L691.6 327.9 L694.6 325.9 L697.6 323.9 L700.7 321.9 L703.8 320.1 L707.0 318.3 L710.2 316.6 L713.5 314.9 L716.8 313.4 L720.2 311.9 L723.6 310.5 L727.0 309.2 L730.5 308.0 L733.9 306.8 L737.5 305.8 L741.0 304.8 L744.6 303.9 L748.2 303.1 L751.8 302.4 L755.4 301.7 L759.0 301.2 L762.7 300.7 L766.3 300.3 L770.0 300.1 L773.7 299.8 L777.4 299.7 L781.1 299.7 L784.7 299.8 L788.4 299.9 L792.1 300.2 L795.7 300.5 L799.4 300.9 L803.0 301.4 L806.7 302.0 L810.3 302.7 L813.9 303.4 L817.4 304.3 L821.0 305.2 L824.5 306.2 L828.0 307.3 L831.4 308.5 L834.8 309.7 L838.2 311.1 L841.6 312.5 L844.9 314.0 L848.2 315.6 L851.4 317.3 L854.6 319.0 L857.7 320.8 L860.8 322.7 L863.8 324.7 L866.8 326.7 L869.7 328.8 L872.6 331.0 L875.4 333.2 L878.1 335.5 L880.8 337.9 L883.4 340.4 L886.0 342.9 L888.4 345.4 L890.9 348.0 L893.2 350.7 L895.5 353.5 L897.7 356.2 L899.8 359.1 L901.9 362.0 L903.8 364.9 L905.7 367.9 L907.5 370.9 L909.3 374.0 L910.9 377.1 L912.5 380.3 L914.0 383.5 L915.3 386.7 L916.7 390.0 L917.9 393.2 L919.0 396.6 L920.1 399.9 L921.0 403.3 L921.9 406.7 L922.7 410.1 L923.3 413.5 L923.9 417.0 L924.5 420.4 L924.9 423.9 L925.2 427.4 L925.4 430.9 L925.5 434.4 L925.6 437.9 L925.5 441.4 L925.4 444.8 L925.2 448.3 L924.8 451.8 L924.8 451.8 L926.0 452.0 M701.5 447.0 L701.5 446.9 L701.7 444.8 L701.9 442.6 L702.2 440.5 L702.5 438.3 L702.8 436.2 L703.3 434.1 L703.8 432.0 L704.3 429.9 L704.9 427.8 L705.5 425.7 L706.2 423.6 L706.9 421.6 L707.7 419.6 L708.5 417.5 L709.4 415.6 L710.3 413.6 L711.3 411.6 L712.3 409.7 L713.4 407.8 L714.5 406.0 L715.6 404.1 L716.8 402.3 L718.0 400.5 L719.3 398.8 L720.6 397.1 L722.0 395.4 L723.4 393.7 L724.9 392.1 L726.3 390.5 L727.8 389.0 L729.4 387.5 L731.0 386.0 L732.6 384.6 L734.3 383.2 L735.9 381.9 L737.7 380.6 L739.4 379.3 L741.2 378.1 L743.0 377.0 L744.8 375.8 L746.7 374.8 L748.5 373.7 L750.4 372.8 L752.4 371.8 L754.3 371.0 L756.3 370.1 L758.2 369.4 L760.2 368.6 L762.2 368.0 L764.3 367.3 L766.3 366.8 L768.4 366.2 L770.4 365.8 L772.5 365.4 L774.6 365.0 L776.7 364.7 L778.7 364.4 L780.8 364.2 L782.9 364.1 L785.0 364.0 L787.1 364.0 L789.2 364.0 L791.3 364.0 L793.4 364.2 L795.5 364.3 L797.5 364.6 L799.6 364.9 L801.7 365.2 L803.7 365.6 L805.8 366.0 L807.8 366.5 L809.8 367.1 L811.8 367.7 L813.7 368.4 L815.7 369.1 L817.6 369.8 L819.6 370.6 L821.4 371.5 L823.3 372.4 L825.2 373.4 L827.0 374.4 L828.8 375.4 L830.5 376.5 L832.3 377.7 L834.0 378.8 L835.7 380.1 L837.3 381.4 L838.9 382.7 L840.5 384.1 L842.0 385.5 L843.5 386.9 L845.0 388.4 L846.4 389.9 L847.8 391.5 L849.2 393.1 L850.5 394.7 L851.8 396.4 L853.0 398.1 L854.2 399.8 L855.3 401.6 L856.4 403.4 L857.4 405.2 L858.4 407.1 L859.4 409.0 L860.3 410.9 L861.2 412.8 L862.0 414.8 L862.8 416.8 L863.5 418.8 L864.1 420.8 L864.7 422.8 L865.3 424.9 L865.8 426.9 L866.3 429.0 L866.7 431.1 L867.1 433.2 L867.4 435.4 L867.6 437.5 L867.8 439.6 L868.0 441.8 L868.1 443.9 L868.1 446.1 L868.1 448.2 L868.0 450.4 L868.0 450.6 L867.5 450.5 M517 447.5 L701.5 447.5 M867.5 451 L1046.5 457.5" fill="none" stroke="#eba35a" stroke-width="1.35" stroke-opacity="0.92" stroke-linejoin="round"/>
<path d="M612.5 414 L630 418.5 L625 410 M956 414 L946 405 M956 414 L966 404 M956 414 L955 404" fill="none" stroke="#e7a158" stroke-width="1.4"/>
<path d="M607 272 L690 257" stroke="#d9564c" stroke-width="1.6"/>
<path d="M690 257 L1047 192" stroke="#b35a56" stroke-width="1.1"/>
<path d="M1012 193 L1047 191.8 L1040 197" fill="none" stroke="#b35a56" stroke-width="1.2"/>
<path d="M607 272 L712 282" stroke="#4a80e0" stroke-width="1.6"/>
<path d="M960 308 L990 311" stroke="#4a80e0" stroke-width="2.2"/>
<path d="M681 252.5 Q685 249 692 252 L700 256.5 L692 261 Q686 263 683 260 Z" fill="#e0443c"/>
<path d="M712 278 Q716 275 722 279 L729 284 L721 287.5 Q715 289 712 286 Z" fill="#3d7de6"/>
<path d="M607 272 V150" stroke="#5dcf6c" stroke-width="1.7"/>
<path d="M606.7 127 L612.8 152 Q610 156 606.7 156 Q603 156 600.8 152 Z" fill="#5dcf6c"/>
<path d="M716 268 L738 270 L726 273" fill="none" stroke="#5dcf6c" stroke-width="1.1"/>
<path d="M640 165 L663 158.7 V200" fill="none" stroke="#4a80e0" stroke-width="1.4"/><path d="M651 162 L663 158.7 V178 Z" fill="#4a80e0" fill-opacity="0.45"/>
<path d="M654 181.6 L685 187 V224" fill="none" stroke="#d9564c" stroke-width="1.4"/><path d="M672 184.8 L685 187 V206 Z" fill="#d9564c" fill-opacity="0.45"/>
<text x="1460" y="140" font-family="Liberation Sans" font-size="11" fill="#5dcf6c" text-anchor="middle">Y</text>
<path d="M1460.5 143V165.5H1475" fill="none" stroke="#5dcf6c" stroke-width="1.2"/><path d="M1461 165.5H1474" stroke="#4a80e0" stroke-width="1.2"/><path d="M1465 164.5H1474" stroke="#d9564c" stroke-width="1.2"/>
<text x="1484" y="167" font-family="Liberation Sans" font-size="11" fill="#4a80e0" text-anchor="middle">Z</text>
<text x="1481" y="171" font-family="Liberation Sans" font-size="10" fill="#d9564c" text-anchor="middle">X</text>
</svg>
<!-- viewport labels -->
<div class="a" style="left:49px;top:129px;width:29px;height:17px;border-radius:3px;background:rgba(20,20,20,0.35)"></div>
<div class="t" style="left:53px;top:130px;font-size:11px;line-height:14px;color:#e6e6e6">透視</div>
<div class="a" style="left:712px;top:128px;width:119px;height:18px;border-radius:3px;background:rgba(20,20,20,0.35)"></div>
<div class="t" style="left:717px;top:130px;font-size:11px;line-height:14px;color:#e2e2e2">デフォルトカメラ</div>
<svg class="a" style="left:810px;top:129px" width="20" height="16"><path d="M3 6V4H8" fill="none" stroke="#cfcfcf" stroke-width="1.3"/><rect x="3" y="6.5" width="8" height="6" fill="none" stroke="#cfcfcf" stroke-width="1.3"/><path d="M12 9.5L16 7V12Z" fill="#cfcfcf"/></svg>
<div class="a" style="left:49px;top:406px;width:50px;height:18px;border-radius:3px;background:rgba(20,20,20,0.35)"></div>
<div class="t" style="left:53px;top:408px;font-size:11px;line-height:14px;color:#e2e2e2">移動</div>
<svg class="a" style="left:79px;top:406px" width="18" height="18"><path d="M8.5 3V15M2.5 9H14.5" stroke="#cfcfcf" stroke-width="1.2"/><path d="M6.5 5L8.5 2.5L10.5 5M6.5 13L8.5 15.5L10.5 13M4.5 7L2 9L4.5 11M12.5 7L15 9L12.5 11" fill="#cfcfcf"/></svg>
<div class="a" style="left:1356px;top:974px;width:140px;height:18px;border-radius:3px;background:rgba(20,20,20,0.35)"></div>
<div class="t" style="left:1361px;top:976px;font-size:11px;line-height:14px;color:#e2e2e2">グリッド間隔<span style="font-size:13px"> : 5000 cm</span></div>

<!-- object manager -->
<div class="a" style="left:1549px;top:60px;width:451px;height:500px;background:#282828"></div>
<div class="a" style="left:1549px;top:60px;width:451px;height:26px;background:#1c1c1c"></div>
<div class="a" style="left:1549px;top:62px;width:94px;height:24px;background:#282828;border-radius:3px 3px 0 0"></div>
<div class="t" style="left:1562px;top:66px;font-size:11px;line-height:14px;color:#e2e2e2">オブジェクト</div>
<div class="t" style="left:1658px;top:66px;font-size:11px;line-height:14px;color:#9a9a9a">テイク</div>
<svg class="a" style="left:1549px;top:86px" width="451" height="26" viewBox="1549 86 451 26"><g fill="#a8a8a8"><rect x="1555" y="91.5" width="17" height="2.2"/><rect x="1555" y="96.5" width="17" height="2.2"/><rect x="1555" y="101.5" width="17" height="2.2"/></g>
 <path d="M1846 94L1851 98L1846 102Z" fill="#d0d0d0"/>
 <circle cx="1918" cy="96.5" r="5" fill="none" stroke="#a8a8a8" stroke-width="1.6"/><path d="M1921.5 100L1926 104.5" stroke="#a8a8a8" stroke-width="2"/>
 <path d="M1936 104V96L1942.5 90L1949 96V104H1944.5V99H1940.5V104Z" fill="none" stroke="#a8a8a8" stroke-width="1.5"/>
 <path d="M1956 93H1972M1959 98H1969M1962 103H1966" stroke="#a8a8a8" stroke-width="2"/>
 <path d="M1986 91H1979V104H1992V97M1984 99L1994 89M1989 89H1994V94" fill="none" stroke="#a8a8a8" stroke-width="1.6"/>
</svg>
<div class="t" style="left:1583px;top:90px;font-size:11px;line-height:14px;color:#dcdcdc">ファイル</div>
<div class="t" style="left:1644px;top:90px;font-size:11px;line-height:14px;color:#dcdcdc">編集</div>
<div class="t" style="left:1682px;top:90px;font-size:11px;line-height:14px;color:#dcdcdc">表示</div>
<div class="t" style="left:1722px;top:90px;font-size:11px;line-height:14px;color:#dedd9c">オブジェクト</div>
<div class="t" style="left:1805px;top:90px;font-size:11px;line-height:14px;color:#dcdcdc">タグ</div>
<!-- tree -->
<div class="a" style="left:1549px;top:113px;width:124px;height:21px;background:#232323"></div><div class="a" style="left:1674px;top:113px;width:326px;height:21px;background:#2c2c2c"></div>
<div class="a" style="left:1673px;top:112px;width:1px;height:448px;background:#1e1e1e"></div>
<svg class="a" style="left:1549px;top:112px" width="451" height="46" viewBox="1549 112 451 46">
 <path d="M1557.5 112V119.5M1562.5 124.5H1568" stroke="#8a8a8a" stroke-width="1" fill="none"/>
 <path d="M1568.5 134V145.5H1580" stroke="#8a8a8a" stroke-width="1" fill="none"/>
 <rect x="1552.5" y="119.5" width="10" height="10" fill="none" stroke="#9a9a9a" stroke-width="1"/><path d="M1554.5 124.5H1560.5" stroke="#9a9a9a"/>
 <path d="M1575.5 117.5L1581.5 120.5V127.5L1575.5 130.5L1569.5 127.5V120.5Z" fill="#9fdcff"/>
 <path d="M1569.5 120.5L1575.5 123.5L1581.5 120.5M1575.5 123.5V130.5" fill="none" stroke="#3a5a6a" stroke-width="0.8"/>
 <g transform="translate(1587.5 144) scale(0.85)" fill="none" stroke="#a9a9f4" stroke-linejoin="round"><path d="M-7.3 -5.2L-2 -8.4Q4.2 -6.4 6.5 -1.2L7.3 4.1L1.4 8.4L-4.5 4.4Q-5.3 2.1 -7.3 0.2Z" stroke-width="1.76"/><path d="M-4.5 -3.5Q0.7 -0.9 1.4 5.5" stroke-width="1.29"/></g>
 <path d="M1640.5 117L1647.5 122L1640.5 127L1633.5 122Z" fill="#6a6a6a"/><path d="M1633.5 126L1640.5 131L1647.5 126" fill="none" stroke="#6a6a6a" stroke-width="1.8"/>
 <path d="M1640.5 139.5L1647.5 144.5L1640.5 149.5L1633.5 144.5Z" fill="#6a6a6a"/><path d="M1633.5 148.5L1640.5 153.5L1647.5 148.5" fill="none" stroke="#6a6a6a" stroke-width="1.8"/>
 <g fill="#6a6a6a"><circle cx="1655.5" cy="119.5" r="2.2"/><circle cx="1655.5" cy="128" r="2.2"/><circle cx="1655.5" cy="142" r="2.2"/><circle cx="1655.5" cy="150.5" r="2.2"/></g>
 <path d="M1661 124L1664 127.5L1670 120.5M1661 146.5L1664 150L1670 143" fill="none" stroke="#a8a8a8" stroke-width="1.3"/>
 <path d="M1678.5 131V117.5H1692" fill="none" stroke="#7a7ae0" stroke-width="1.6"/><path d="M1680 119H1690Q1689 126 1680 127Z" fill="#cfcfcf"/>
</svg>
<div class="t" style="left:1588px;top:116px;font-size:11px;line-height:14px;color:#d7934f">立方体</div>
<div class="t" style="left:1600px;top:138px;font-size:11px;line-height:14px;color:#eab04e;font-weight:bold">屈曲</div>

<!-- attributes -->
<div class="a" style="left:1549px;top:560px;width:451px;height:3px;background:#1c1c1c"></div>
<div class="a" style="left:1549px;top:563px;width:451px;height:431px;background:#282828"></div>
<div class="a" style="left:1549px;top:563px;width:451px;height:23px;background:#1d1d1d"></div>
<div class="a" style="left:1549px;top:563px;width:84px;height:23px;background:#282828;border-radius:3px 3px 0 0"></div>
<div class="t" style="left:1562px;top:567px;font-size:12.5px;line-height:14px;color:#e4e4e4">Attributes</div>
<div class="t" style="left:1649px;top:567px;font-size:11px;line-height:14px;color:#9a9a9a">レイヤー</div>
<div class="t" style="left:1583px;top:590px;font-size:11px;line-height:14px;color:#dcdcdc">モード</div>
<div class="t" style="left:1633px;top:590px;font-size:11px;line-height:14px;color:#dcdcdc">編集</div>
<div class="t" style="left:1672px;top:590px;font-size:11px;line-height:14px;color:#dcdcdc">ユーザーデータ</div>
<svg class="a" style="left:1549px;top:586px" width="451" height="260" viewBox="1549 586 451 260">
 <g fill="#a8a8a8"><rect x="1556" y="593" width="16" height="2.2"/><rect x="1556" y="598" width="16" height="2.2"/><rect x="1556" y="603" width="16" height="2.2"/></g>
 <path d="M1838 598.5H1824M1830 592.5L1824 598.5L1830 604.5" fill="none" stroke="#b0b0b0" stroke-width="1.8"/>
 <path d="M1845 598.5H1859M1853 592.5L1859 598.5L1853 604.5" fill="none" stroke="#555" stroke-width="1.8"/>
 <path d="M1875 606V591M1869 597L1875 591L1881 597" fill="none" stroke="#b0b0b0" stroke-width="1.8"/>
 <circle cx="1896" cy="597" r="5" fill="none" stroke="#b0b0b0" stroke-width="1.6"/><path d="M1899.5 600.5L1904 605" stroke="#b0b0b0" stroke-width="2"/>
 <path d="M1912 593H1928M1915 598H1925M1918 603H1922" stroke="#b0b0b0" stroke-width="2"/>
 <rect x="1935.5" y="598" width="12" height="8" fill="none" stroke="#b0b0b0" stroke-width="1.6"/><path d="M1938 598V594.5Q1941.5 590 1945 594.5V598" fill="none" stroke="#b0b0b0" stroke-width="1.6"/>
 <circle cx="1964" cy="598.5" r="7.5" fill="none" stroke="#b0b0b0" stroke-width="1.6"/><circle cx="1964" cy="598.5" r="3" fill="none" stroke="#b0b0b0" stroke-width="1.6"/>
 <path d="M1987 591H1980V605H1994V598M1985 600L1995 590M1990 590H1995V595" fill="none" stroke="#b0b0b0" stroke-width="1.6"/>
 <!-- title icon -->
 <g transform="translate(1563.8 627.9) scale(1.0)" fill="none" stroke="#a9a9f4" stroke-linejoin="round"><path d="M-7.3 -5.2L-2 -8.4Q4.2 -6.4 6.5 -1.2L7.3 4.1L1.4 8.4L-4.5 4.4Q-5.3 2.1 -7.3 0.2Z" stroke-width="1.70"/><path d="M-4.5 -3.5Q0.7 -0.9 1.4 5.5" stroke-width="1.30"/></g>
 <!-- dropdown -->
 <rect x="1851" y="619" width="143" height="19" rx="9" fill="#363636"/>
 <path d="M1971.5 619V638" stroke="#282828" stroke-width="1.2"/>
 <path d="M1979.5 626L1983.5 630L1987.5 626" fill="none" stroke="#d0d0d0" stroke-width="1.5"/>
 <!-- tabs -->
 <rect x="1552" y="644" width="307" height="19" rx="3" fill="#363636"/>
 <rect x="1706" y="644" width="76" height="19" fill="#575ca3"/>
 <path d="M1628.5 644V663M1705.5 644V663M1782.5 644V663" stroke="#2a2a2a" stroke-width="1"/>
 <!-- size row -->
 <path d="M1561 697.5L1566 702.5L1561 707.5L1556 702.5Z" fill="none" stroke="#d0d0d0" stroke-width="1.2"/>
 <rect x="1641" y="694" width="102" height="18" rx="3" fill="#1a1a1a"/>
 <rect x="1750" y="694" width="102" height="18" rx="3" fill="#1a1a1a"/>
 <rect x="1859" y="694" width="103" height="18" rx="3" fill="#1a1a1a"/>

 <!-- align dropdown -->
 <rect x="1641" y="716" width="351" height="19" rx="3" fill="#363636"/>
 <path d="M1978.5 723L1982.5 727L1986.5 723" fill="none" stroke="#d0d0d0" stroke-width="1.5"/>
 <!-- fit button -->
 <rect x="1566.5" y="738" width="91" height="18" rx="9" fill="#363636"/>
 <!-- mode segmented -->
 <path d="M1561 763L1566 768L1561 773L1556 768Z" fill="none" stroke="#d0d0d0" stroke-width="1.2"/>
 <rect x="1641" y="759" width="196" height="18.5" rx="3" fill="#363636"/>
 <rect x="1641" y="759" width="64.5" height="18.5" rx="3" fill="#575ca3"/>
 <path d="M1705.5 759V777.5M1771.5 759V777.5" stroke="#2a2a2a"/>
 <!-- strength -->
 <path d="M1561 786L1566 791L1561 796L1556 791Z" fill="none" stroke="#d0d0d0" stroke-width="1.2"/>
 <rect x="1641" y="782" width="102" height="18" rx="3" fill="#1a1a1a"/>
 <rect x="1751" y="788.5" width="241" height="5" rx="2.5" fill="#1d1d1d"/>
 <rect x="1751" y="788.5" width="181" height="5" rx="2.5" fill="#5b61ad"/>
 <rect x="1930" y="783" width="4.5" height="15" fill="#c8c8c8"/>
 <!-- angle -->
 <path d="M1561 809L1566 814L1561 819L1556 814Z" fill="none" stroke="#d0d0d0" stroke-width="1.2"/>
 <rect x="1641" y="805" width="102" height="18" rx="3" fill="#1a1a1a"/>
 <rect x="1751" y="811.5" width="241" height="5" rx="2.5" fill="#1d1d1d"/>
 <rect x="1751" y="811.5" width="36" height="5" rx="2.5" fill="#5b61ad"/>
 <rect x="1785" y="806" width="4.5" height="15" fill="#c8c8c8"/>
 <g fill="none" stroke="#8a8a8a" stroke-width="1.1">
  <path d="M1646.5 700L1643.5 704.5L1646.5 709M1737.5 700L1740.5 704.5L1737.5 709"/>
  <path d="M1755.5 700L1752.5 704.5L1755.5 709M1846.5 700L1849.5 704.5L1846.5 709"/>
  <path d="M1864.5 700L1861.5 704.5L1864.5 709M1956.5 700L1959.5 704.5L1956.5 709"/>
  <path d="M1646.5 788L1643.5 792.5L1646.5 797M1737.5 788L1740.5 792.5L1737.5 797"/>
  <path d="M1646.5 811L1643.5 815.5L1646.5 820M1737.5 811L1740.5 815.5L1737.5 820"/>
 </g>
 <!-- red highlight -->

 <!-- keep length -->
 <path d="M1561 831L1566 836L1561 841L1556 836Z" fill="none" stroke="#d0d0d0" stroke-width="1.2"/>
 <rect x="1641" y="830" width="13" height="13" rx="2" fill="#3a3a3a"/>
</svg>
<div class="t" style="left:1581px;top:620px;font-size:11px;line-height:14px;color:#d2d2d2">屈曲デフォーマ [屈曲]</div>
<div class="t" style="left:1858px;top:620px;font-size:11px;line-height:14px;color:#d2d2d2">カスタム</div>
<div class="t" style="left:1578px;top:646px;font-size:11px;line-height:14px;color:#dcdcdc">基本</div>
<div class="t" style="left:1655px;top:646px;font-size:11px;line-height:14px;color:#dcdcdc">座標</div>
<div class="t" style="left:1710px;top:646px;font-size:11px;line-height:14px;color:#ffffff">オブジェクト</div>
<div class="t" style="left:1792px;top:646px;font-size:11px;line-height:14px;color:#dcdcdc">フィールド</div>
<div class="t" style="left:1553px;top:671px;font-size:11px;line-height:14px;color:#f2f2f2;font-weight:bold">オブジェクトの属性</div>
<div class="t" style="left:1578px;top:695px;font-size:11px;line-height:14px;color:#bdbdbd">サイズ</div>
<div class="t" style="left:1672px;top:695px;font-size:13px;line-height:14px;color:#e6e6e6">70 cm</div>
<div class="t" style="left:1779px;top:695px;font-size:13px;line-height:14px;color:#e6e6e6">200 cm</div>
<div class="t" style="left:1891px;top:695px;font-size:13px;line-height:14px;color:#e6e6e6">80 cm</div>
<div class="t" style="left:1578px;top:718px;font-size:11px;line-height:14px;color:#bdbdbd">整列</div>
<div class="t" style="left:1649px;top:718px;font-size:13px;line-height:14px;color:#e0e0e0">Y+</div>
<div class="t" style="left:1578px;top:739px;font-size:11px;line-height:14px;color:#d0d0d0">親に合わせる</div>
<div class="t" style="left:1578px;top:761px;font-size:11px;line-height:14px;color:#bdbdbd">モード</div>
<div class="t" style="left:1649px;top:761px;font-size:11px;line-height:14px;color:#f0f0f0">制限付き</div>
<div class="t" style="left:1710px;top:761px;font-size:11px;line-height:14px;color:#d0d0d0">ボックス内</div>
<div class="t" style="left:1787px;top:761px;font-size:11px;line-height:14px;color:#d0d0d0">無制限</div>
<div class="t" style="left:1578px;top:784px;font-size:11px;line-height:14px;color:#bdbdbd">強度</div>
<div class="t" style="left:1675px;top:784px;font-size:13px;line-height:14px;color:#e6e6e6">182 °</div>
<div class="t" style="left:1578px;top:807px;font-size:11px;line-height:14px;color:#bdbdbd">角度</div>
<div class="t" style="left:1678px;top:807px;font-size:13px;line-height:14px;color:#e6e6e6">53 °</div>
<div class="t" style="left:1578px;top:829px;font-size:11px;line-height:14px;color:#bdbdbd">長さを維持</div>

<!-- window edges -->
<div class="a" style="left:1997px;top:31px;width:2px;height:963px;background:#171717"></div>
<div class="a" style="left:1999px;top:31px;width:1px;height:963px;background:#bdbdbd"></div>
<svg class="a" style="left:0;top:0" width="8" height="8"><path d="M0 0H6Q0 0 0 6Z" fill="#000"/></svg>
<svg class="a" style="left:1992px;top:0" width="8" height="8"><path d="M8 0H2Q8 0 8 6Z" fill="#000"/></svg>
<svg class="a" style="left:1540px;top:790px" width="460" height="50" viewBox="1540 790 460 50"><rect x="1553.8" y="801.6" width="450" height="25.6" fill="none" stroke="#e0402b" stroke-width="3.6"/></svg>

</body>
</html>
